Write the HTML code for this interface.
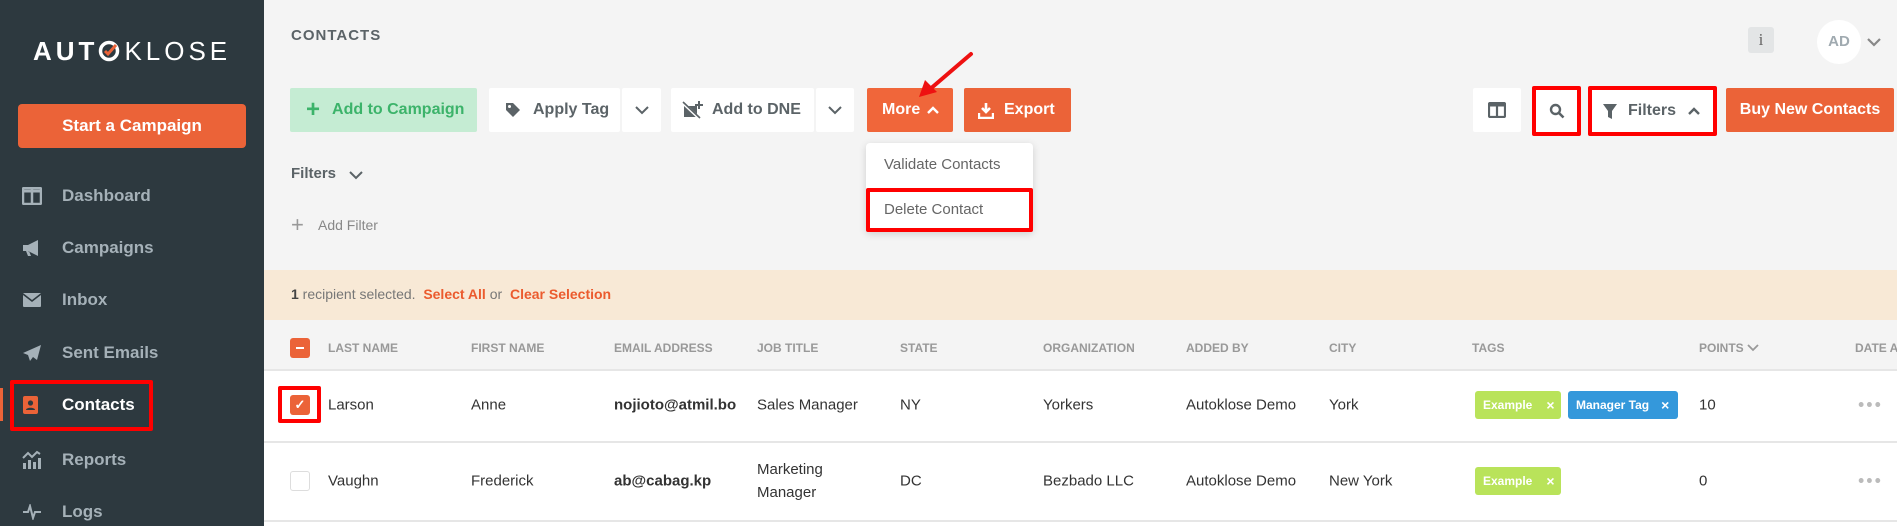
<!DOCTYPE html>
<html><head><meta charset="utf-8"><style>
*{margin:0;padding:0;box-sizing:border-box}
body{width:1897px;height:526px;overflow:hidden;background:#f4f4f4;font-family:"Liberation Sans",Arial,sans-serif;position:relative;color:#333}
.a{position:absolute}
#side{left:0;top:0;width:264px;height:526px;background:#2d393f}
.logo{left:33px;top:38px;font-size:26px;color:#fff;letter-spacing:4px;display:flex;align-items:center;line-height:26px}
.start{left:18px;top:104px;width:228px;height:44px;background:#eb6338;border-radius:4px;color:#fff;font-weight:bold;font-size:17px;text-align:center;line-height:44px}
.nav{left:62px;font-size:17px;font-weight:bold;color:#a5b1b8;transform:translateY(-50%)}
.ic{left:22px;transform:translateY(-50%)}
.btn{height:44px;top:88px;background:#fff;border-radius:2px;font-size:16px;color:#5b6367;display:flex;align-items:center}
.or{background:#eb6338;color:#fff;font-weight:bold}
.hd{top:348px;font-size:12px;font-weight:bold;color:#999;transform:translateY(-50%)}
.c1{top:405px;font-size:15px;color:#333;transform:translateY(-50%)}
.c2{top:481px;font-size:15px;color:#333;transform:translateY(-50%)}
.tag{height:28px;border-radius:3px;color:#fff;font-weight:bold;font-size:12px;display:flex;align-items:center;padding-left:8px}
.red{border:4px solid #f00;border-radius:2px}
</style></head><body>
<div id="side" class="a">
 <div class="a logo"><b>AUT</b><svg width="22" height="22" viewBox="0 0 22 22" style="margin-right:4px"><circle cx="11" cy="11" r="8.5" fill="none" stroke="#fff" stroke-width="3.5"/><path d="M7 11l3 3 8-9" fill="none" stroke="#eb6338" stroke-width="3"/></svg><span>KLOSE</span></div>
 <div class="a start">Start a Campaign</div>

 <svg class="a ic" style="top:196px" width="20" height="18" viewBox="0 0 20 18"><rect x="1" y="1" width="18" height="16" rx="1" fill="none" stroke="#a5b1b8" stroke-width="2.5"/><line x1="10" y1="1" x2="10" y2="17" stroke="#a5b1b8" stroke-width="2.5"/><line x1="1" y1="4" x2="19" y2="4" stroke="#a5b1b8" stroke-width="3"/></svg>
 <div class="a nav" style="top:196px">Dashboard</div>
 <svg class="a ic" style="top:248px" width="20" height="18" viewBox="0 0 20 18"><path d="M1 6h5l10-5v16l-10-5H1z M4 12l2 5h3l-2-5z" fill="#a5b1b8"/></svg>
 <div class="a nav" style="top:248px">Campaigns</div>
 <svg class="a ic" style="top:300px" width="20" height="16" viewBox="0 0 20 16"><rect x="1" y="1" width="18" height="14" rx="1" fill="#a5b1b8"/><path d="M1 2l9 7 9-7" fill="none" stroke="#2d393f" stroke-width="1.6"/></svg>
 <div class="a nav" style="top:300px">Inbox</div>
 <svg class="a ic" style="top:353px" width="20" height="18" viewBox="0 0 20 18"><path d="M19 1L1 9l5 2 2 6 3-4 4 3z" fill="#a5b1b8"/></svg>
 <div class="a nav" style="top:353px">Sent Emails</div>
 <div class="a" style="left:0;top:388px;width:3px;height:33px;background:#eb6338"></div>
 <div class="a red" style="left:10px;top:380px;width:143px;height:51px"></div>
 <svg class="a ic" style="top:405px" width="18" height="20" viewBox="0 0 18 20"><rect x="1" y="1" width="15" height="18" rx="2" fill="#eb6338"/><circle cx="8.5" cy="8" r="2.6" fill="#2d393f"/><path d="M4 15c0-3 9-3 9 0z" fill="#2d393f"/></svg>
 <div class="a nav" style="top:405px;color:#fff">Contacts</div>
 <svg class="a ic" style="top:460px" width="20" height="20" viewBox="0 0 20 20"><path d="M1 8l5-5 4 4 5-5 3 2" fill="none" stroke="#a5b1b8" stroke-width="2"/><rect x="1" y="13" width="3" height="6" fill="#a5b1b8"/><rect x="6" y="10" width="3" height="9" fill="#a5b1b8"/><rect x="11" y="12" width="3" height="7" fill="#a5b1b8"/><rect x="16" y="8" width="3" height="11" fill="#a5b1b8"/></svg>
 <div class="a nav" style="top:460px">Reports</div>
 <svg class="a ic" style="top:512px" width="20" height="16" viewBox="0 0 20 16"><path d="M1 8h5l2-6 3 12 2-6h6" fill="none" stroke="#a5b1b8" stroke-width="2"/></svg>
 <div class="a nav" style="top:512px">Logs</div>
</div>

<div class="a" style="left:291px;top:27px;font-size:15px;font-weight:bold;color:#5b6367;letter-spacing:1px">CONTACTS</div>
<div class="a" style="left:1748px;top:27px;width:26px;height:26px;background:#e3e5e6;border-radius:3px;text-align:center;line-height:26px;font-family:'Liberation Serif',serif;font-size:17px;color:#666">i</div>
<div class="a" style="left:1817px;top:20px;width:44px;height:44px;border-radius:50%;background:#fff;text-align:center;line-height:44px;font-weight:bold;font-size:15px;color:#a0aab0">AD</div>
<svg class="a" style="left:1866px;top:37px" width="16" height="10" viewBox="0 0 16 10"><path d="M2 2l6 6 6-6" fill="none" stroke="#888" stroke-width="2.2"/></svg>

<div class="a btn" style="left:290px;width:187px;background:#c5ecd3;color:#3cb36a;font-weight:bold"><span style="font-size:24px;margin:0 12px 0 16px;line-height:1">+</span>Add to Campaign</div>
<div class="a btn" style="left:489px;width:131px"><svg style="margin:0 12px 0 16px" width="16" height="16" viewBox="0 0 16 16"><path d="M1 1h7l7 7-7 7-7-7z" fill="#5b6367"/><circle cx="4.5" cy="4.5" r="1.5" fill="#fff"/></svg><b style="font-weight:bold">Apply Tag</b></div>
<div class="a btn" style="left:622px;width:39px;justify-content:center"><svg width="14" height="9" viewBox="0 0 14 9"><path d="M1 1l6 6 6-6" fill="none" stroke="#5b6367" stroke-width="2"/></svg></div>
<div class="a btn" style="left:671px;width:143px"><svg style="margin:0 8px 0 11px" width="22" height="20" viewBox="0 0 22 20"><rect x="2" y="6" width="13" height="11" fill="#5b6367"/><path d="M1 3l17 16" stroke="#fff" stroke-width="3"/><path d="M1 2l17 16" stroke="#5b6367" stroke-width="1.6"/><path d="M17 1v8M13 5h8" stroke="#5b6367" stroke-width="2"/></svg><b>Add to DNE</b></div>
<div class="a btn" style="left:816px;width:38px;justify-content:center"><svg width="14" height="9" viewBox="0 0 14 9"><path d="M1 1l6 6 6-6" fill="none" stroke="#5b6367" stroke-width="2"/></svg></div>
<div class="a btn or" style="left:867px;width:86px;background:#f0663a"><span style="margin-left:15px">More</span><svg style="margin-left:7px" width="12" height="8" viewBox="0 0 12 8"><path d="M1 7l5-5 5 5" fill="none" stroke="#fff" stroke-width="2.4"/></svg></div>
<div class="a btn or" style="left:964px;width:107px"><svg style="margin:0 10px 0 14px" width="16" height="17" viewBox="0 0 16 17"><path d="M8 1v9M4 6l4 4 4-4" fill="none" stroke="#fff" stroke-width="2.6"/><path d="M1 11v5h14v-5" fill="none" stroke="#fff" stroke-width="2.4"/></svg>Export</div>

<svg class="a" style="left:915px;top:50px" width="62" height="52" viewBox="0 0 62 52"><path d="M56 4L14 40" stroke="#e11" stroke-width="4" stroke-linecap="round"/><path d="M4 47l6-17 12 12z" fill="#e11"/></svg>

<div class="a" style="left:866px;top:143px;width:167px;height:89px;background:#fff;border-radius:4px;box-shadow:0 2px 8px rgba(0,0,0,.15)"></div>
<div class="a" style="left:884px;top:156px;font-size:15px;color:#666">Validate Contacts</div>
<div class="a red" style="left:866px;top:188px;width:167px;height:44px"></div>
<div class="a" style="left:884px;top:201px;font-size:15px;color:#666">Delete Contact</div>

<div class="a btn" style="left:1473px;width:48px;justify-content:center"><svg width="18" height="16" viewBox="0 0 18 16"><rect x="1" y="1" width="16" height="14" rx="1" fill="none" stroke="#5b6367" stroke-width="2.2"/><line x1="9" y1="1" x2="9" y2="15" stroke="#5b6367" stroke-width="2.2"/><line x1="1" y1="3" x2="17" y2="3" stroke="#5b6367" stroke-width="3"/></svg></div>
<div class="a btn red" style="left:1532px;width:49px;height:50px;top:86px;justify-content:center"><svg width="16" height="16" viewBox="0 0 16 16"><circle cx="6.5" cy="6.5" r="4.5" fill="none" stroke="#5b6367" stroke-width="2.4"/><path d="M10 10l4.5 4.5" stroke="#5b6367" stroke-width="2.6"/></svg></div>
<div class="a btn red" style="left:1588px;width:129px;height:50px;top:86px"><svg style="margin:0 10px 0 10px" width="16" height="17" viewBox="0 0 16 17"><path d="M1 1h14l-5 7v8l-4-2v-6z" fill="#5b6367"/></svg><b>Filters</b><svg style="margin-left:12px" width="12" height="8" viewBox="0 0 12 8"><path d="M1 7l5-5 5 5" fill="none" stroke="#5b6367" stroke-width="2.4"/></svg></div>
<div class="a btn or" style="left:1726px;width:168px;justify-content:center">Buy New Contacts</div>

<div class="a" style="left:291px;top:165px;font-size:15px;font-weight:bold;color:#5b6367">Filters</div>
<svg class="a" style="left:349px;top:171px" width="14" height="9" viewBox="0 0 14 9"><path d="M1 1l6 6 6-6" fill="none" stroke="#5b6367" stroke-width="2"/></svg>
<div class="a" style="left:291px;top:214px;font-size:22px;color:#999;line-height:1">+</div>
<div class="a" style="left:318px;top:217px;font-size:14px;color:#888">Add Filter</div>

<div class="a" style="left:264px;top:270px;width:1633px;height:50px;background:#f8e9d6"></div>
<div class="a" style="left:291px;top:286px;font-size:14px;color:#777"><b style="color:#444">1</b> recipient selected.&nbsp; <b style="color:#eb5b2e">Select All</b> or&nbsp; <b style="color:#eb5b2e">Clear Selection</b></div>

<div class="a" style="left:264px;top:369px;width:1633px;height:157px;background:#fff"></div>
<div class="a" style="left:264px;top:369px;width:1633px;height:2px;background:#e6e6e6"></div>
<div class="a" style="left:264px;top:441px;width:1633px;height:2px;background:#e6e6e6"></div>
<div class="a" style="left:264px;top:520px;width:1633px;height:2px;background:#e6e6e6"></div>

<div class="a" style="left:290px;top:338px;width:20px;height:20px;background:#eb6338;border-radius:3px"><div style="margin:9px 6px;height:2px;background:#fff"></div></div>
<div class="a hd" style="left:328px">LAST NAME</div>
<div class="a hd" style="left:471px">FIRST NAME</div>
<div class="a hd" style="left:614px">EMAIL ADDRESS</div>
<div class="a hd" style="left:757px">JOB TITLE</div>
<div class="a hd" style="left:900px">STATE</div>
<div class="a hd" style="left:1043px">ORGANIZATION</div>
<div class="a hd" style="left:1186px">ADDED BY</div>
<div class="a hd" style="left:1329px">CITY</div>
<div class="a hd" style="left:1472px">TAGS</div>
<div class="a hd" style="left:1699px">POINTS <svg width="12" height="8" viewBox="0 0 12 8"><path d="M1 1l5 5 5-5" fill="none" stroke="#999" stroke-width="1.8"/></svg></div>
<div class="a hd" style="left:1855px;white-space:nowrap">DATE ADDED</div>

<div class="a red" style="left:278px;top:386px;width:43px;height:37px"></div>
<div class="a" style="left:290px;top:395px;width:20px;height:20px;background:#eb6338;border-radius:3px;color:#fff;font-size:13px;text-align:center;line-height:20px;font-weight:bold">&#x2713;</div>
<div class="a c1" style="left:328px">Larson</div>
<div class="a c1" style="left:471px">Anne</div>
<div class="a c1" style="left:614px;font-weight:bold">nojioto@atmil.bo</div>
<div class="a c1" style="left:757px">Sales Manager</div>
<div class="a c1" style="left:900px">NY</div>
<div class="a c1" style="left:1043px">Yorkers</div>
<div class="a c1" style="left:1186px">Autoklose Demo</div>
<div class="a c1" style="left:1329px">York</div>
<div class="a tag" style="left:1475px;top:391px;width:86px;background:#b9e35a">Example<span style="margin-left:14px;font-size:14px">×</span></div>
<div class="a tag" style="left:1568px;top:391px;width:110px;background:#3498db">Manager Tag<span style="margin-left:12px;font-size:14px">×</span></div>
<div class="a c1" style="left:1699px">10</div>
<div class="a c1" style="left:1858px;color:#bbb;letter-spacing:2px;font-size:18px">•••</div>

<div class="a" style="left:290px;top:471px;width:20px;height:20px;border:1px solid #ddd;border-radius:3px;background:#fff"></div>
<div class="a c2" style="left:328px">Vaughn</div>
<div class="a c2" style="left:471px">Frederick</div>
<div class="a c2" style="left:614px;font-weight:bold">ab@cabag.kp</div>
<div class="a c2" style="left:757px;line-height:23px">Marketing<br>Manager</div>
<div class="a c2" style="left:900px">DC</div>
<div class="a c2" style="left:1043px">Bezbado LLC</div>
<div class="a c2" style="left:1186px">Autoklose Demo</div>
<div class="a c2" style="left:1329px">New York</div>
<div class="a tag" style="left:1475px;top:467px;width:86px;background:#b9e35a">Example<span style="margin-left:14px;font-size:14px">×</span></div>
<div class="a c2" style="left:1699px">0</div>
<div class="a c2" style="left:1858px;color:#bbb;letter-spacing:2px;font-size:18px">•••</div>
</body></html>
